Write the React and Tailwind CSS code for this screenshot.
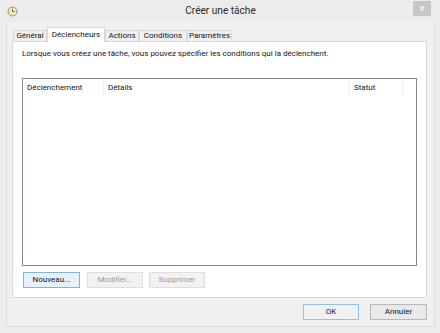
const tabs = [
  { label: 'Général', w: 'w-[34px]' },
  { label: 'Déclencheurs', w: 'w-[58px]', active: true },
  { label: 'Actions', w: 'w-[34px]' },
  { label: 'Conditions', w: 'w-[48px]' },
  { label: 'Paramètres', w: 'w-[45px]' },
];

const TaskIcon = () => (
  <svg width="11" height="11" viewBox="0 0 11 11">
    <circle cx="5.5" cy="5.5" r="4.5" fill="#f3e7b4" stroke="#8a8f96" strokeWidth="1" />
    <path d="M5.5 2.8 V5.5 H7.6" fill="none" stroke="#5a6470" strokeWidth="0.9" />
  </svg>
);

export default function App() {
  return (
    <div className="w-[440px] h-[333px] overflow-hidden bg-[#ececec] text-[#141414] font-['Roboto',sans-serif]">
      {/* Title bar */}
      <div className="h-[22px] flex items-center">
        <div className="w-[22px] pl-[7px] flex items-center">
          <TaskIcon />
        </div>
        <div className="flex-1 text-center text-[10.1px] leading-none text-[#2b2b2b] pl-[6px]">Créer une tâche</div>
        <div className="w-[18px] h-[15px] mb-[5px] bg-[#c6c6c6] flex items-center justify-center text-white text-[10px] leading-none mr-[9px]">
          ×
        </div>
      </div>

      {/* Client area */}
      <div className="ml-[6px] w-[429px] h-[305px] bg-[#f0f0f0] border-x border-b border-[#dcdcdc] pt-[5px] text-[8px] leading-[12px]">
        {/* Tabs */}
        <div className="flex items-start h-[14px] ml-[6px] relative z-10">
          {tabs.map((t) =>
            t.active ? (
              <div
                key={t.label}
                className={`${t.w} h-[15px] bg-white border-x border-t border-[#d9d9d9] flex items-center justify-center pb-[1px]`}
              >
                {t.label}
              </div>
            ) : (
              <div
                key={t.label}
                className={`${t.w} h-[11px] mt-[3px] bg-[#f0f0f0] border-x border-t border-[#d9d9d9] flex items-center justify-center`}
              >
                {t.label}
              </div>
            )
          )}
        </div>

        {/* Tab page */}
        <div className="ml-[5px] w-[415px] h-[257px] bg-white border border-[#d9d9d9] pl-[9px] pt-[6px]">
          <div>Lorsque vous créez une tâche, vous pouvez spécifier les conditions qui la déclenchent.</div>

          <div className="mt-[18px] w-[395px] h-[188px] border border-[#828790] bg-white">
            <div className="h-[17px] flex items-center">
              <div className="w-[81px] h-full pl-[4px] flex items-center border-r border-[#f1f2f4]">Déclenchement</div>
              <div className="w-[246px] h-full pl-[4px] flex items-center border-r border-[#f1f2f4]">Détails</div>
              <div className="w-[53px] h-full pl-[4px] flex items-center border-r border-[#f1f2f4]">Statut</div>
            </div>
          </div>

          <div className="flex gap-[6px] mt-[6px] ml-[1px]">
            <div className="w-[57px] h-[16px] bg-[#e5f1fb] border border-[#7eb4ea] flex items-center justify-center">
              Nouveau...
            </div>
            <div className="w-[56px] h-[16px] bg-[#f2f2f2] border border-[#dedede] text-[#9a9a9a] flex items-center justify-center ml-[1px]">
              Modifier...
            </div>
            <div className="w-[56px] h-[16px] bg-[#f2f2f2] border border-[#dedede] text-[#9a9a9a] flex items-center justify-center">
              Supprimer
            </div>
          </div>
        </div>

        {/* Dialog buttons */}
        <div className="w-[420px] flex justify-end gap-[11px] mt-[6px]">
          <div className="w-[56px] h-[16px] bg-[#f1f1f1] border border-[#8ec1f0] flex items-center justify-center">OK</div>
          <div className="w-[57px] h-[16px] bg-[#e9e9e9] border border-[#b9b9b9] flex items-center justify-center">Annuler</div>
        </div>
      </div>
    </div>
  );
}
